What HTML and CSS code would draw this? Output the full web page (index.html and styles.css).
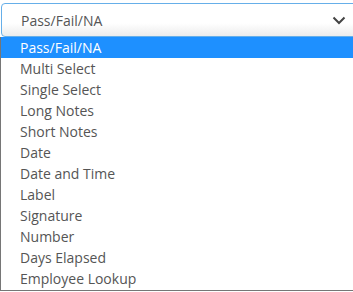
FILE: index.html
```html
<!DOCTYPE html>
<html lang="en">
<head>
  <meta charset="UTF-8">
  <title>Field Type</title>
  <link rel="stylesheet" href="styles.css">
</head>
<body>
  <div class="picker">
    <div class="select">
      <span class="select-value">Pass/Fail/NA</span>
      <svg class="chevron" width="14" height="9" viewBox="0 0 14 9">
        <path d="M1.5 1.5 L7 7 L12.5 1.5" fill="none" stroke="#444" stroke-width="2"/>
      </svg>
    </div>
    <ul class="options">
      <li class="option selected">Pass/Fail/NA</li>
      <li class="option">Multi Select</li>
      <li class="option">Single Select</li>
      <li class="option">Long Notes</li>
      <li class="option">Short Notes</li>
      <li class="option">Date</li>
      <li class="option">Date and Time</li>
      <li class="option">Label</li>
      <li class="option">Signature</li>
      <li class="option">Number</li>
      <li class="option">Days Elapsed</li>
      <li class="option">Employee Lookup</li>
    </ul>
  </div>
</body>
</html>
```

FILE: styles.css
```css
body {
  margin: 0;
  font-family: "Open Sans", sans-serif;
  font-size: 14px;
  color: #555;
  background: #fff;
  overflow: hidden;
}
.picker {
  width: 370px;
  padding-top: 3px;
}
.select {
  margin-left: 1px;
  height: 32px;
  border: 1px solid #66afe9;
  border-radius: 4px;
  background: linear-gradient(#fff 60%, #ececec);
  display: flex;
  align-items: center;
  padding-left: 19px;
  box-sizing: content-box;
}
.select-value {
  flex: 1;
}
.chevron {
  margin-right: 23px;
  margin-top: 1px;
}
.options {
  list-style: none;
  margin: 0;
  padding: 0 0 1px;
  border: 1px solid #767676;
  border-top: none;
  background: #fff;
}
.option {
  height: 21px;
  line-height: 21px;
  padding-left: 19px;
}
.option.selected {
  background: #1e90ff;
  color: #fff;
}
```
